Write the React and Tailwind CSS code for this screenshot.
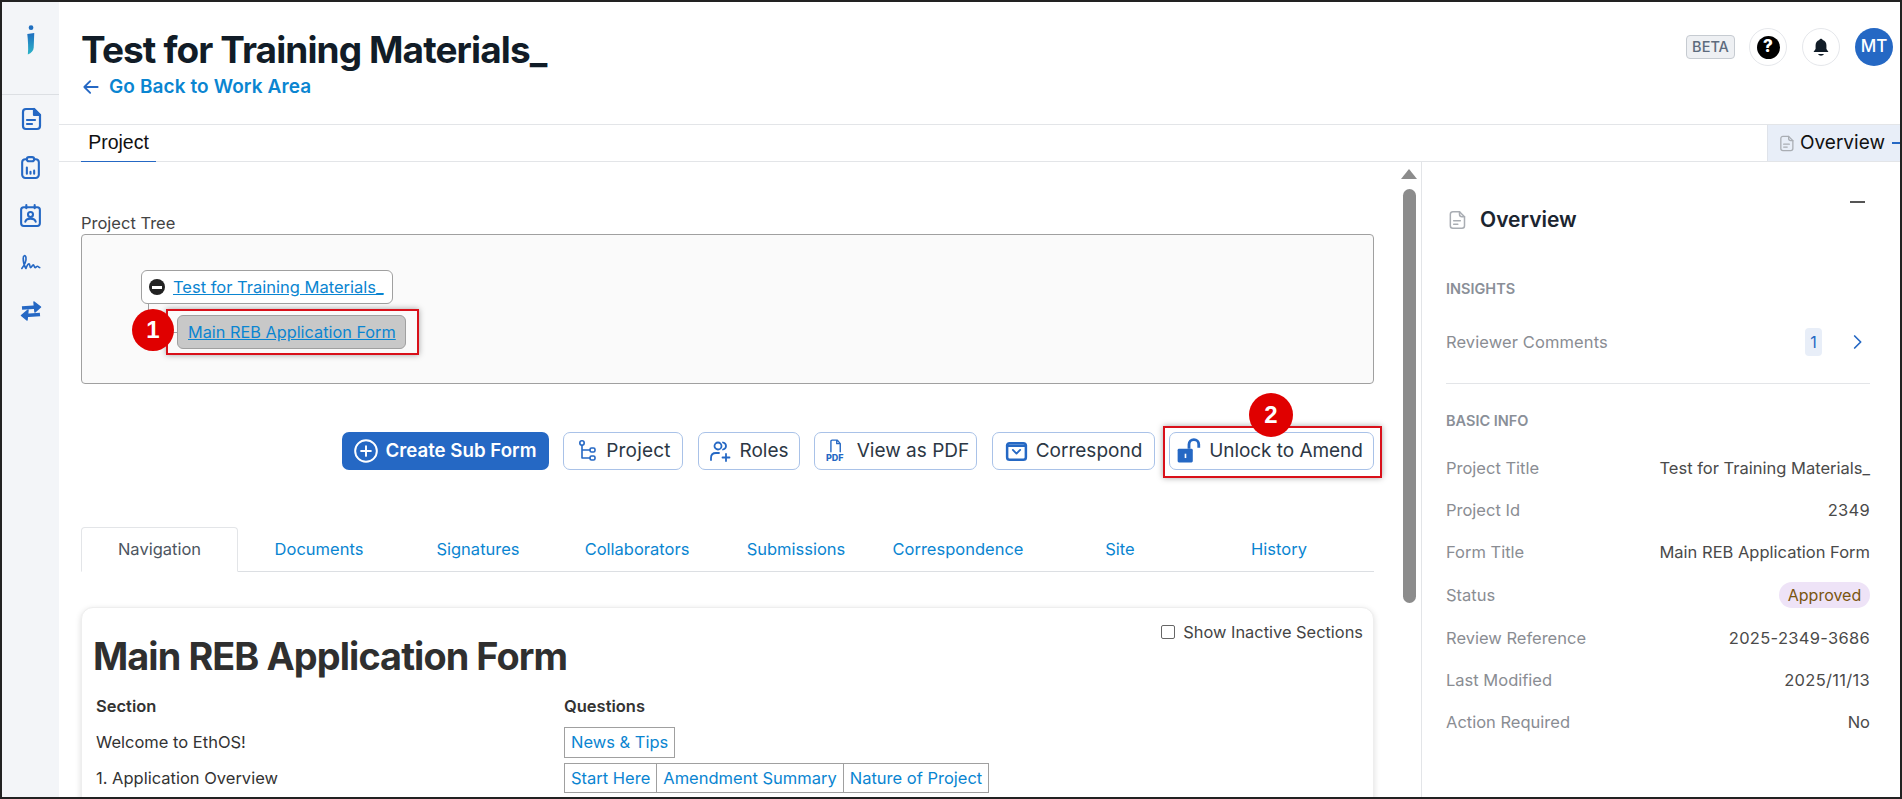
import React from "react";

const BLUE = "#2568c4";

function Ico({ className = "", children, vb = "0 0 24 24", sw = 2, color = BLUE }) {
  return (
    <svg viewBox={vb} className={className} fill="none" stroke={color} strokeWidth={sw} strokeLinecap="round" strokeLinejoin="round">
      {children}
    </svg>
  );
}

const DocIcon = ({ className, color, sw }) => (
  <Ico className={className} color={color} sw={sw}>
    <path d="M7 2h8l6 6v11a3 3 0 0 1-3 3H7a3 3 0 0 1-3-3V5a3 3 0 0 1 3-3z" />
    <path d="M15 2v3a3 3 0 0 0 3 3h3" />
    <path d="M8 13h8M8 17h5" />
  </Ico>
);

function Logo() {
  return (
    <svg viewBox="0 0 10 28" className="h-[30px] w-[11px]">
      <defs>
        <linearGradient id="lg" x1="0" y1="0" x2="0" y2="1">
          <stop offset="0" stopColor="#1f6fc0" />
          <stop offset="1" stopColor="#2cb5c8" />
        </linearGradient>
      </defs>
      <circle cx="5.5" cy="2.5" r="2.2" fill="#1f6fc0" />
      <path d="M2 8.5 8.5 7.500 8 21c-.2 3-2 5-5.500 6.500C3.200 22 2.600 14 2 8.500z" fill="url(#lg)" />
    </svg>
  );
}

function Sidebar() {
  return (
    <div className="flex w-[57px] shrink-0 flex-col bg-[#f3f5f8]">
      <div className="flex h-[93px] items-center justify-center border-b border-[#dcdfe3] pb-[16px]">
        <Logo />
      </div>
      <div className="flex h-[48px] items-center justify-center">
        <svg viewBox="0 0 24 24" className="h-[24px] w-[24px]" fill="none" stroke={BLUE} strokeWidth="2.200" strokeLinecap="round" strokeLinejoin="round">
          <path d="M7 2h8l6 6v11a3 3 0 0 1-3 3H7a3 3 0 0 1-3-3V5a3 3 0 0 1 3-3z" />
          <path d="M15 2v6h6z" fill={BLUE} />
          <path d="M8 13h8M8 17h5" />
        </svg>
      </div>
      <div className="flex h-[48px] items-center justify-center">
        <Ico className="h-[25px] w-[25px]">
          <rect x="4" y="4" width="16" height="18" rx="3" />
          <rect x="8.500" y="2" width="7" height="4" rx="2" fill="#f3f5f8" />
          <path d="M8.500 12v6M12 16v2M15.500 15v3" />
        </Ico>
      </div>
      <div className="flex h-[48px] items-center justify-center">
        <Ico className="h-[25px] w-[25px]">
          <rect x="3" y="4" width="18" height="18" rx="2.500" />
          <path d="M8 2v3M16 2v3" />
          <circle cx="12" cy="11" r="2.400" />
          <path d="M7 18c.6-2.200 2.600-3 5-3s4.400.8 5 3" />
        </Ico>
      </div>
      <div className="flex h-[48px] items-center justify-center">
        <Ico className="h-[22px] w-[24px]" sw={1.8}>
          <path d="M2 18c3-4 5-9 4.500-12C6 3 3.500 3.500 3.500 7c0 4 1 8 3 11 1-3 2.500-5 3.500-5s.5 4 1.500 4 2-3 3-3 1 3 2 3 1.500-1.500 2.500-1.500 1 1 2.500 1.500" />
        </Ico>
      </div>
      <div className="flex h-[48px] items-center justify-center">
        <svg viewBox="0 0 24 24" className="h-[24px] w-[24px]" fill="none" stroke={BLUE} strokeWidth="3.600" strokeLinejoin="round">
          <path d="M3 9 18 8" />
          <path d="M15 3l6.500 5-5.500 5z" fill={BLUE} strokeWidth="1.500" />
          <path d="M21 15.500 6 16.500" />
          <path d="M9 11l-6.500 5.500L8 21z" fill={BLUE} strokeWidth="1.500" />
        </svg>
      </div>
    </div>
  );
}

function Header() {
  return (
    <div className="flex h-[122px] shrink-0 justify-between pl-[22px] pr-[7px]">
      <div className="pt-[24px]">
        <h1 className="text-[37px] font-bold leading-[48px] tracking-[-0.9px] text-[#111c27]">Test for Training Materials_</h1>
        <div className="mt-[1px] flex h-[24px] items-center gap-[8px]">
          <Ico className="h-[20px] w-[20px]" sw={2.2}>
            <path d="M20 12H4M11 5l-7 7 7 7" />
          </Ico>
          <span className="text-[19px] font-semibold tracking-[0.1px] text-[#0a85d1]">Go Back to Work Area</span>
        </div>
      </div>
      <div className="flex items-start gap-[15px] pt-[26px]">
        <div className="mt-[7px] mr-[-1px] flex h-[24px] w-[49px] items-center justify-center rounded-[4px] border border-[#c6cbd1] bg-[#eef0f3] text-[14.500px] font-medium text-[#5d6b7d]">BETA</div>
        <div className="flex h-[38px] w-[38px] items-center justify-center rounded-full border border-[#e5e7eb] bg-white">
          <div className="flex h-[23px] w-[23px] items-center justify-center rounded-full bg-black text-[17px] font-extrabold text-white">?</div>
        </div>
        <div className="flex h-[38px] w-[38px] items-center justify-center rounded-full border border-[#e5e7eb] bg-white">
          <svg viewBox="0 0 24 24" className="h-[20px] w-[20px]" fill="#111c27">
            <path d="M12 2a2 2 0 0 1 2 1.500c3 .9 4.500 3.500 4.500 6.500v4.500L21 18H3l2.500-3.500V10c0-3 1.500-5.600 4.500-6.500A2 2 0 0 1 12 2z" />
            <path d="M8.500 20.500h7c-.6 1.200-2 2-3.500 2s-2.900-.8-3.500-2z" />
          </svg>
        </div>
        <div className="flex h-[38px] w-[38px] items-center justify-center rounded-full bg-[#2568c4] text-[17px] font-medium text-white">MT</div>
      </div>
    </div>
  );
}

function TabBar() {
  return (
    <div className="flex h-[38px] shrink-0 justify-between border-y border-[#e3e5e8] pl-[22px]">
      <div className="flex h-[37px] w-[75px] items-center justify-center border-b border-[#2568c4] font-['Liberation_Sans'] text-[19.500px] text-[#111]">Project</div>
      <div className="flex w-[133px] items-center border-l border-[#dfe3ea] bg-[#e8eef8] pl-[10px]">
        <DocIcon className="h-[17px] w-[17px]" color="#a9adb3" sw={1.8} />
        <span className="ml-[5px] w-[91px] whitespace-nowrap text-[19px] text-[#111]">Overview</span>
        <span className="ml-[1px] h-[2px] w-[8px] bg-[#2568c4]" />
      </div>
    </div>
  );
}

function TreeBox() {
  return (
    <div className="mt-[1px] h-[150px] rounded-[4px] border border-[#a0a0a0] bg-[#fafafa] pl-[59px] pt-[35px]">
      <div className="relative flex h-[34px] w-[252px] items-center rounded-[6px] border border-[#a0a0a0] bg-white pl-[7px]">
        <span className="flex h-[16px] w-[16px] items-center justify-center rounded-full bg-[#222]">
          <span className="h-[3px] w-[10px] bg-white" />
        </span>
        <span className="ml-[8px] whitespace-nowrap text-[16.500px] text-[#0a85d1] underline">Test for Training Materials_</span>
        <span className="absolute left-[6px] top-[32px] h-[30px] w-px bg-[#a0a0a0]" />
        <span className="absolute left-[6px] top-[61px] h-px w-[30px] bg-[#a0a0a0]" />
      </div>
      <div className="relative ml-[36px] mt-[11px] flex h-[34px] w-[229px] items-center rounded-[6px] border border-[#a0a0a0] bg-[#c8c8c8] pl-[10px]">
        <span className="whitespace-nowrap text-[16.300px] text-[#0a85d1] underline">Main REB Application Form</span>
        <span className="absolute -left-[12px] -top-[7px] h-[46px] w-[253px] border-2 border-[#d9101a] shadow-[0_0_6px_rgba(0,0,0,0.35)]" />
        <span className="absolute -left-[46px] -top-[7px] flex h-[42px] w-[42px] items-center justify-center rounded-full bg-[#e00000] font-['Liberation_Sans'] text-[24px] font-bold text-white">1</span>
      </div>
    </div>
  );
}

const btn = "flex h-[38px] items-center justify-center gap-[7px] rounded-[7px] border border-[#a9c2e8] bg-white text-[19px] text-[#2c3744] whitespace-nowrap";

function Actions() {
  return (
    <div className="mt-[48px] flex items-center justify-end gap-[14.500px]">
      <button className="flex h-[38px] w-[207px] items-center justify-center gap-[6px] rounded-[7px] bg-[#2568c4] text-[18.700px] font-semibold text-white whitespace-nowrap">
        <Ico className="h-[26px] w-[26px]" color="#fff" sw={1.8}>
          <circle cx="12" cy="12" r="10" />
          <path d="M12 7.500v9M7.500 12h9" />
        </Ico>
        Create Sub Form
      </button>
      <button className={`${btn} w-[120px]`}>
        <Ico className="h-[24px] w-[24px]" sw={1.6}>
          <circle cx="7" cy="4" r="2.200" />
          <rect x="15" y="9" width="5" height="4" rx="1.500" />
          <rect x="15" y="17" width="5" height="4" rx="1.500" />
          <path d="M7 6.500V19h8M7 11h8" />
        </Ico>
        <span className="tracking-[0.2px]">Project</span>
      </button>
      <button className={`${btn} w-[102px]`}>
        <Ico className="h-[24px] w-[24px]" sw={1.8}>
          <circle cx="10" cy="7" r="3.500" />
          <path d="M3 21v-2c0-3 2-5 5-5h3M15 3.500c2 .5 3 2 3 3.500s-1 3-3 3.500M18 15v7M14.500 18.500h7" />
        </Ico>
        Roles
      </button>
      <button className={`${btn} w-[163px] gap-[11px] pl-[2px]`}>
        <span className="flex h-[24px] w-[22px] flex-col items-center">
          <Ico className="h-[14px] w-[16px]" sw={2.400}>
            <path d="M5 22V4a2 2 0 0 1 2-2h9l5 6v14M15 2v6h6" />
          </Ico>
          <span className="text-[9px] font-extrabold leading-[9px] text-[#2568c4]">PDF</span>
        </span>
        View as PDF
      </button>
      <button className={`${btn} w-[163px]`}>
        <Ico className="h-[25px] w-[25px]" sw={2.400}>
          <rect x="3" y="4" width="18" height="16" rx="2.500" />
          <path d="M3 6.500h18" />
          <path d="M8.500 10.500l3.500 3.500 3.500-3.500" strokeWidth="1.800" />
        </Ico>
        Correspond
      </button>
      <div className="relative">
        <button className={`${btn} w-[205px] pr-[4px] tracking-[-0.05px]`}>
          <svg viewBox="0 0 24 24" className="h-[26px] w-[26px]" fill="none">
            <rect x="1.500" y="10" width="14" height="12.500" rx="1.200" fill={BLUE} />
            <path d="M12 10V6a4.500 4.500 0 0 1 9 0v3" stroke={BLUE} strokeWidth="2.600" />
            <rect x="8" y="14.500" width="1.500" height="4" fill="#fff" />
          </svg>
          Unlock to Amend
        </button>
        <span className="absolute -left-[6px] -right-[8px] -top-[6px] -bottom-[8px] border-2 border-[#d9101a] shadow-[0_0_6px_rgba(0,0,0,0.35)]" />
        <span className="absolute left-[80px] top-[-39px] flex h-[44px] w-[44px] items-center justify-center rounded-full bg-[#e00000] font-['Liberation_Sans'] text-[24px] font-bold text-white">2</span>
      </div>
    </div>
  );
}

const tabs = [
  ["Documents", "w-[162px]"],
  ["Signatures", "w-[156px]"],
  ["Collaborators", "w-[162px]"],
  ["Submissions", "w-[156px]"],
  ["Correspondence", "w-[168px]"],
  ["Site", "w-[156px]"],
  ["History", "w-[162px]"],
];

function Tabs() {
  return (
    <div className="mt-[57px] flex h-[45px] border-b border-[#dcdfe3]">
      <div className="flex h-[45px] w-[157px] items-center justify-center rounded-t-[4px] border border-b-white border-[#e3e5e8] bg-white text-[16.500px] text-[#4d5560]">Navigation</div>
      {tabs.map(([t, w]) => (
        <div key={t} className={`flex items-center justify-center text-[16.500px] text-[#0a85d1] ${w}`}>{t}</div>
      ))}
    </div>
  );
}

function Cell({ children }) {
  return <span className="flex items-center whitespace-nowrap border-r border-[#a0a0a0] px-[6px] text-[16.500px] text-[#0a85d1] last:border-r-0">{children}</span>;
}

function FormCard() {
  return (
    <div className="mt-[35px] rounded-xl border border-[#eeeeee] bg-white pb-[40px] pl-[11px] pr-[10px] pt-[14px] shadow-[0_2px_6px_rgba(0,0,0,0.14)]">
      <div className="flex h-[20px] items-center justify-end gap-[8px]">
        <span className="h-[14px] w-[14px] rounded-[2px] border border-[#666] bg-white" />
        <span className="whitespace-nowrap text-[16.400px] text-[#444]">Show Inactive Sections</span>
      </div>
      <h2 className="mt-[-10px] text-[37.800px] font-bold leading-[48px] tracking-[-0.9px] text-[#2f2f2f]">Main REB Application Form</h2>
      <div className="mt-[16px] flex h-[20px] items-center pl-[3px] text-[16.500px] font-semibold text-[#333]">
        <span className="w-[468px]">Section</span>
        <span>Questions</span>
      </div>
      <div className="mt-[11px] flex h-[31px] items-center pl-[3px]">
        <span className="w-[468px] text-[16.500px] text-[#333]">Welcome to EthOS!</span>
        <div className="flex h-[31px] border border-[#a0a0a0]"><Cell>News &amp; Tips</Cell></div>
      </div>
      <div className="mt-[5px] flex h-[30px] items-center pl-[3px]">
        <span className="w-[468px] text-[16.500px] text-[#333]">1. Application Overview</span>
        <div className="flex h-[30px] border border-[#a0a0a0]"><Cell>Start Here</Cell><Cell>Amendment Summary</Cell><Cell>Nature of Project</Cell></div>
      </div>
    </div>
  );
}

function InfoRow({ k, v, tall, num }) {
  return (
    <div className={`flex items-center justify-between ${tall ? "h-[44px]" : "h-[42px]"}`}>
      <span className="text-[16.500px] text-[#8a8d93]">{k}</span>
      {v === "Approved" ? (
        <span className="flex h-[26px] w-[91px] items-center justify-center rounded-full bg-[#eee3f7] text-[16px] text-[#7a5510]">{v}</span>
      ) : (
        <span className={`whitespace-nowrap text-[16.500px] text-[#4a4a4a] ${num ? "tracking-[0.3px]" : ""}`}>{v}</span>
      )}
    </div>
  );
}

function RightPanel() {
  return (
    <div className="flex-1 border-l border-[#e3e5e8] pl-[24px] pr-[30px] pt-[39px]">
      <div className="flex h-[36px] justify-between pr-[5px]">
        <div className="mt-[1px] flex h-[36px] items-center pl-[1px]">
          <DocIcon className="h-[20px] w-[20px]" color="#a9adb3" sw={1.8} />
          <span className="ml-[13px] text-[21px] font-semibold text-[#1b2530]">Overview</span>
        </div>
        <span className="h-[2px] w-[15px] bg-[#555]" />
      </div>
      <div className="mt-[42px] flex h-[20px] items-center text-[14.500px] font-semibold text-[#8a8f98]">INSIGHTS</div>
      <div className="mt-[29px] flex h-[28px] items-center justify-between">
        <span className="text-[16.500px] tracking-[0.1px] text-[#8a8d93]">Reviewer Comments</span>
        <div className="flex items-center">
          <span className="flex h-[28px] w-[17px] items-center justify-center rounded-[4px] bg-[#e8eef8] text-[16px] text-[#2568c4]">1</span>
          <Ico className="ml-[28px] mr-[4px] h-[20px] w-[16px]" sw={2.6}>
            <path d="M7 3l9 9-9 9" />
          </Ico>
        </div>
      </div>
      <div className="mt-[27px] h-px bg-[#e3e5e8]" />
      <div className="mt-[27px] flex h-[20px] items-center text-[14.500px] font-semibold text-[#8a8f98]">BASIC INFO</div>
      <div className="mt-[16px]">
        <InfoRow k="Project Title" v="Test for Training Materials_" />
        <InfoRow k="Project Id" v="2349" num />
        <InfoRow k="Form Title" v="Main REB Application Form" />
        <InfoRow k="Status" v="Approved" tall />
        <InfoRow k="Review Reference" v="2025-2349-3686" num />
        <InfoRow k="Last Modified" v="2025/11/13" num />
        <InfoRow k="Action Required" v="No" />
      </div>
    </div>
  );
}

function Scroller() {
  return (
    <div className="flex w-[21px] shrink-0 flex-col items-center pt-[7px] pr-[3px]">
      <span className="h-0 w-0 border-x-[8px] border-b-[10px] border-x-transparent border-b-[#8c8c8c]" />
      <span className="mt-[10px] h-[414px] w-[13px] rounded-full bg-[#8c8c8c]" />
    </div>
  );
}

export default function App() {
  return (
    <div className="flex h-[799px] w-[1902px] overflow-hidden border-2 border-[#222] bg-white font-['Inter','Liberation_Sans',sans-serif]">
      <Sidebar />
      <div className="flex min-w-0 flex-1 flex-col">
        <Header />
        <TabBar />
        <div className="flex min-h-0 flex-1">
          <div className="w-[1341px] shrink-0 overflow-hidden pl-[22px] pr-[26px] pt-[51px]">
            <div className="flex h-[20px] items-center text-[16.500px] text-[#444]">Project Tree</div>
            <TreeBox />
            <Actions />
            <Tabs />
            <FormCard />
          </div>
          <Scroller />
          <RightPanel />
        </div>
      </div>
    </div>
  );
}
